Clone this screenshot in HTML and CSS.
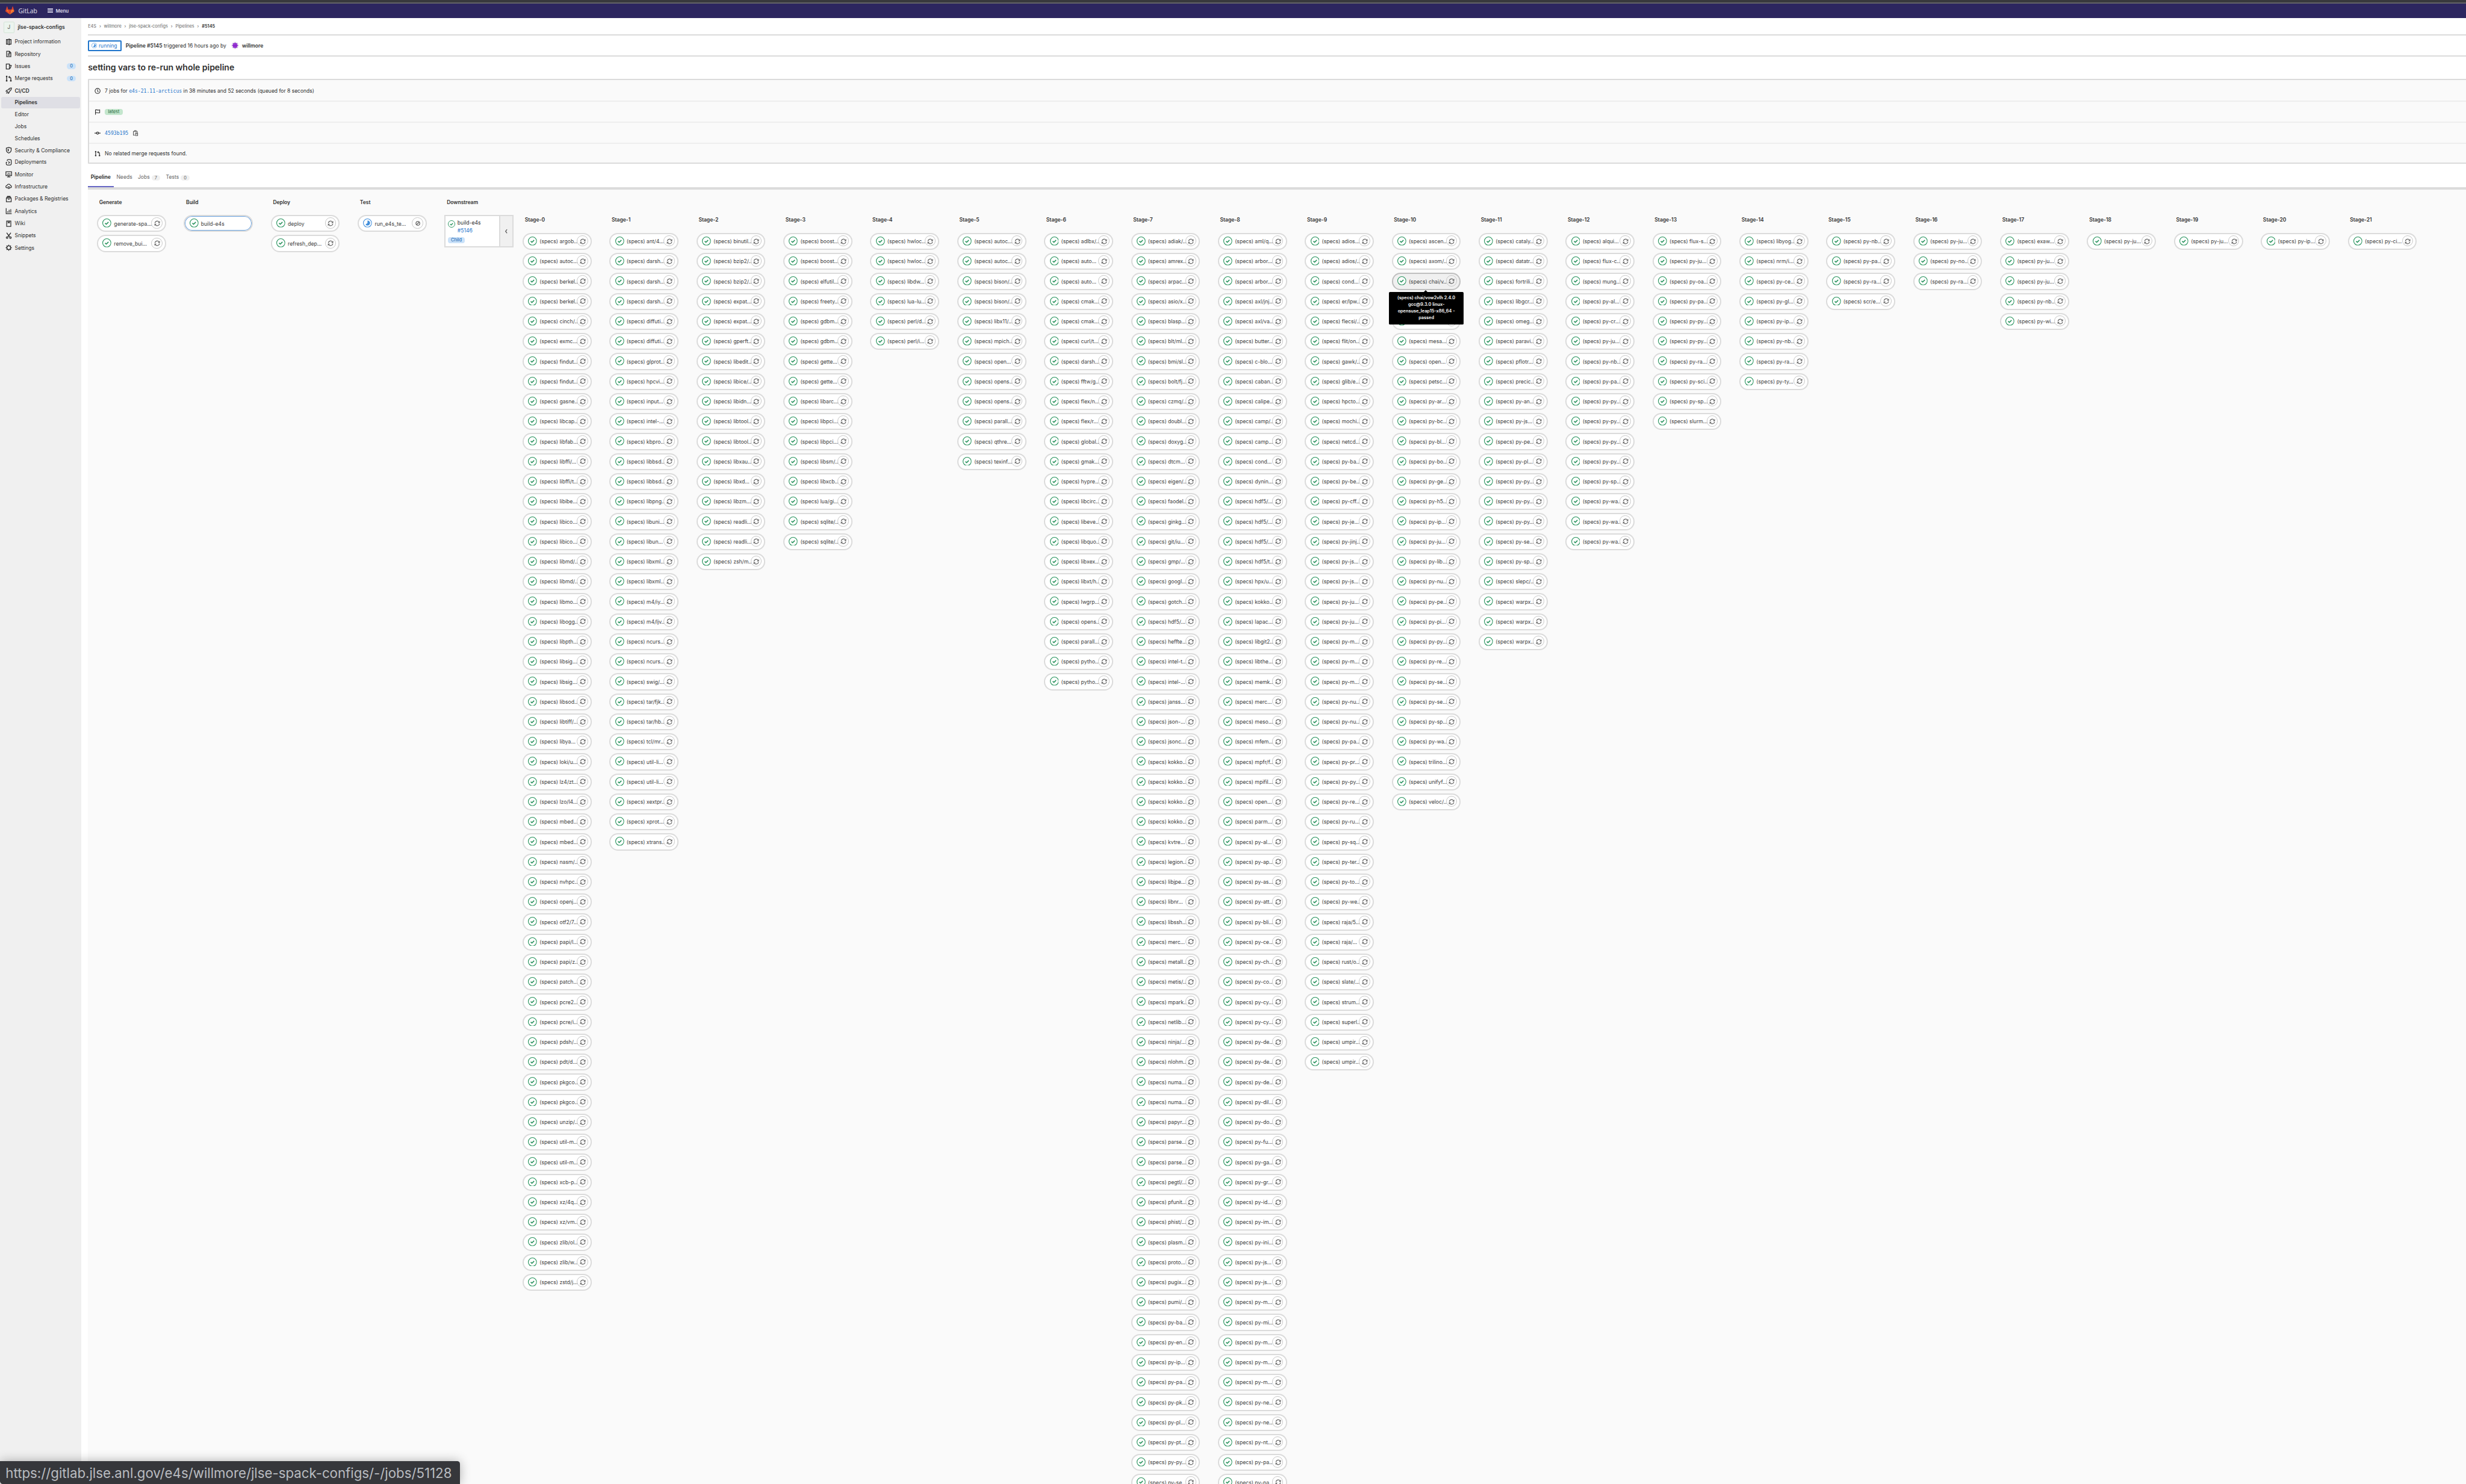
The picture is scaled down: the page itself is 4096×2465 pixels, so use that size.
FILE: index.html
```html
<!DOCTYPE html>
<html lang="en">
<head>
<meta charset="utf-8">
<title>Pipeline #5145 · jlse-spack-configs · GitLab</title>
<link rel="stylesheet" href="styles.css">
</head>
<body>
<svg class="sprite" aria-hidden="true">
  <symbol id="success" viewBox="0 0 16 16"><circle cx="8" cy="8" r="7.4" fill="#fff" stroke="#24915a" stroke-width="1.2"/><path d="M4.9 8.2 7.1 10.3 11 6.4" fill="none" stroke="#24915a" stroke-width="1.7"/></symbol>
  <symbol id="running" viewBox="0 0 16 16"><circle cx="8" cy="8" r="7.4" fill="#fff" stroke="#428fdc" stroke-width="1.2"/><path d="M8 3.4a4.6 4.6 0 1 1-3.6 7.5L8 8z" fill="#428fdc"/></symbol>
  <symbol id="retry" viewBox="0 0 16 16"><path d="M2 7.2A6.1 6.1 0 0 1 12.6 4M14 8.8A6.1 6.1 0 0 1 3.4 12" fill="none" stroke="#666" stroke-width="2"/><path d="M15 1.6V7H9.6zM1 14.4V9h5.4z" fill="#666"/></symbol>
  <symbol id="cancel" viewBox="0 0 16 16"><circle cx="8" cy="8" r="5" fill="none" stroke="#666" stroke-width="2"/><path d="M5 11l6-6" stroke="#666" stroke-width="2"/></symbol>
  <symbol id="project" viewBox="0 0 16 16"><path d="M6 2.5 9.5 1.2v13.6L6 13.5H2.5v-11H6zM6 2.5v11M9.5 2.5h4v11h-4" fill="none" stroke="currentColor" stroke-width="1.9"/></symbol>
  <symbol id="doc" viewBox="0 0 16 16"><path d="M3 1.5h6.5L13 5v9.5H3zM9 1.5V6h4M5.5 8.2h5M5.5 11h5" fill="none" stroke="currentColor" stroke-width="1.8"/></symbol>
  <symbol id="issues" viewBox="0 0 16 16"><path d="M2 2h7.5v12H2zM9.5 4.5l4.5 1-2.2 6-2.3 1.2" fill="none" stroke="currentColor" stroke-width="1.9"/></symbol>
  <symbol id="merge" viewBox="0 0 16 16"><path d="M3 3.5v10M13 13V7.5a3 3 0 0 0-3-3H8.5" fill="none" stroke="currentColor" stroke-width="1.9"/><path d="M10.4 1v7L6.8 4.5z" fill="currentColor"/><circle cx="3" cy="3" r="1.9" fill="currentColor"/><circle cx="3" cy="13.2" r="1.9" fill="currentColor"/><circle cx="13" cy="13.2" r="1.9" fill="currentColor"/></symbol>
  <symbol id="rocket" viewBox="0 0 16 16"><path d="M14.5 1.5c-4.5 0-7 2.2-8.5 5L3 7.200 1.500 9.500l3 .5 1.500 1.500.5 3 2.300-1.500.7-3c2.800-1.500 5-4 5-8.500zM2 14.500l2.300-2.300" fill="none" stroke="currentColor" stroke-width="1.800"/><circle cx="10.300" cy="5.700" r="1.200" fill="currentColor"/></symbol>
  <symbol id="shield" viewBox="0 0 16 16"><path d="M8 1.200 13.800 3v4.500c0 3.500-2.500 5.800-5.800 7.300C4.700 13.300 2.200 11 2.200 7.500V3z" fill="none" stroke="currentColor" stroke-width="1.800"/><path d="M8 4.500v6.500c-2-1-3-2.500-3-5z" fill="currentColor"/></symbol>
  <symbol id="deploy" viewBox="0 0 16 16"><path d="M4.500 5V3a1.500 1.500 0 0 1 1.500-1.500h5.500A2.500 2.500 0 0 1 14 4v8a2.500 2.500 0 0 1-2.500 2.500H4.500A2.500 2.500 0 0 1 2 12V8h2M7 6l3 2.500L7 11" fill="none" stroke="currentColor" stroke-width="1.800"/></symbol>
  <symbol id="monitor" viewBox="0 0 16 16"><path d="M1.200 2h13.600v9H1.200zM8 11v3M4 14.200h8M5 9V6.500M8 9V5M11 9V6" fill="none" stroke="currentColor" stroke-width="1.800"/></symbol>
  <symbol id="cloud" viewBox="0 0 16 16"><path d="M4.500 11.500H4a2.800 2.800 0 0 1-.3-5.600A4.500 4.500 0 0 1 12.300 6 2.800 2.800 0 0 1 12 11.500h-.5" fill="none" stroke="currentColor" stroke-width="1.800"/><circle cx="8" cy="11" r="2.200" fill="none" stroke="currentColor" stroke-width="1.900"/></symbol>
  <symbol id="package" viewBox="0 0 16 16"><path d="M2.200 6h11.600v8.500H2.200zM3.500 5.500V3.500h9v2M5 3.500V1.500h6v2M6 8.700h4" fill="none" stroke="currentColor" stroke-width="1.800"/></symbol>
  <symbol id="chart" viewBox="0 0 16 16"><path d="M1.800 1v13.200H15M5.500 12V8.500M9 12V5M12.800 12V3.500" fill="none" stroke="currentColor" stroke-width="1.800"/></symbol>
  <symbol id="book" viewBox="0 0 16 16"><path d="M3 1.500h10v13H3zM6.500 1.500v4.500l1.600-1 1.600 1V1.500" fill="none" stroke="currentColor" stroke-width="1.800"/></symbol>
  <symbol id="snippet" viewBox="0 0 16 16"><path d="M3 1l7 9.500M13 1 6 10.500" fill="none" stroke="currentColor" stroke-width="2"/><circle cx="4" cy="12.500" r="2" fill="none" stroke="currentColor" stroke-width="1.800"/><circle cx="12" cy="12.500" r="2" fill="none" stroke="currentColor" stroke-width="1.800"/></symbol>
  <symbol id="gear" viewBox="0 0 16 16"><circle cx="8" cy="8" r="4.500" fill="none" stroke="currentColor" stroke-width="2"/><path d="M8 .8v2.500M8 12.700v2.500M.8 8h2.500M12.700 8h2.500M2.900 2.900l1.800 1.800M11.300 11.300l1.800 1.800M2.900 13.100l1.800-1.800M11.300 4.700l1.800-1.800" stroke="currentColor" stroke-width="2"/></symbol>
  <symbol id="clock" viewBox="0 0 16 16"><circle cx="8" cy="8" r="6.600" fill="none" stroke="currentColor" stroke-width="1.800"/><path d="M8 3.800V8l2 3" fill="none" stroke="currentColor" stroke-width="1.700"/></symbol>
  <symbol id="flag" viewBox="0 0 16 16"><path d="M2.500 15V2.500C6 .8 8.500 4.500 13.500 2.500v7.300C8.500 11.500 6 8.200 2.500 10" fill="none" stroke="currentColor" stroke-width="1.800"/></symbol>
  <symbol id="commit" viewBox="0 0 16 16"><circle cx="8" cy="8" r="2.700" fill="none" stroke="currentColor" stroke-width="1.900"/><path d="M0 8h5M11 8h5" stroke="currentColor" stroke-width="1.900"/></symbol>
  <symbol id="copy" viewBox="0 0 16 16"><path d="M6 13.500H2.500V3.500h10V6M5.500 3.500V1.500h4v2M8 7.500h5.500v7H8zM9.500 10h2.500" fill="none" stroke="currentColor" stroke-width="1.700"/></symbol>
  <symbol id="tanuki" viewBox="0 0 36 36"><path d="M2 14 18 34.400.4 21.600a1.400 1.400 0 0 1-.4-1.400z" fill="#e24329"/><path d="m34 14-16 20.400 17.600-12.800a1.400 1.400 0 0 0 .4-1.400z" fill="#fc6d26"/><path d="M2 14h9.400L18 34.400z" fill="#fc6d26"/><path d="M34 14h-9.400L18 34.400z" fill="#fc8a36"/><path d="M11.400 14h13.200L18 34.400z" fill="#e24329"/><path d="M2 14 6 1.600c.2-.6 1.200-.6 1.400 0l4 12.400zM34 14 30 1.600c-.2-.6-1.200-.6-1.400 0l-4 12.400z" fill="#e24329"/></symbol>
</svg>

<div class="page">
  <div class="window-edge"></div>
  <header class="navbar">
    <svg class="logo"><use href="#tanuki"/></svg>
    <span class="brand">GitLab</span>
    <span class="burger"><i></i><i></i><i></i></span>
    <span class="menu">Menu</span>
  </header>

  <div class="body">
    <aside class="sidebar">
      <div class="context"><span class="avatar">J</span><b>jlse-spack-configs</b></div>
      <nav>
        <a><svg><use href="#project"/></svg>Project information</a>
        <a><svg><use href="#doc"/></svg>Repository</a>
        <a><svg><use href="#issues"/></svg>Issues<em>0</em></a>
        <a><svg><use href="#merge"/></svg>Merge requests<em>0</em></a>
        <a class="open"><svg><use href="#rocket"/></svg>CI/CD</a>
        <a class="sub active">Pipelines</a>
        <a class="sub">Editor</a>
        <a class="sub">Jobs</a>
        <a class="sub">Schedules</a>
        <a class="short"><svg><use href="#shield"/></svg>Security &amp; Compliance</a>
        <a><svg><use href="#deploy"/></svg>Deployments</a>
        <a><svg><use href="#monitor"/></svg>Monitor</a>
        <a><svg><use href="#cloud"/></svg>Infrastructure</a>
        <a><svg><use href="#package"/></svg>Packages &amp; Registries</a>
        <a><svg><use href="#chart"/></svg>Analytics</a>
        <a><svg><use href="#book"/></svg>Wiki</a>
        <a><svg><use href="#snippet"/></svg>Snippets</a>
        <a><svg><use href="#gear"/></svg>Settings</a>
      </nav>
    </aside>

    <main class="main">
      <div class="crumbs"><span>E4S</span><i>›</i><span>willmore</span><i>›</i><span>jlse-spack-configs</span><i>›</i><span>Pipelines</span><i>›</i><b>#5145</b></div>
      <div class="pipeline-head">
        <span class="state"><svg><use href="#running"/></svg>running</span>
        <span class="trigger"><b>Pipeline #5145</b> triggered 16 hours ago by</span>
        <svg class="user" viewBox="0 0 14 14"><circle cx="7" cy="7" r="7" fill="#f0f0f0"/><circle cx="7" cy="7" r="4.300" fill="#8a22cc"/><path d="M6.400 1.500h1.200v11H6.400zM1.500 6.400h11v1.200h-11zM3 3h1.500v1.500H3zM9.500 3H11v1.500H9.500zM3 9.500h1.500V11H3zM9.500 9.500H11V11H9.500z" fill="#8a22cc"/><path d="M4.700 4.700h1v1h-1zM8.300 4.700h1v1h-1zM4.700 8.300h1v1h-1zM8.300 8.300h1v1h-1z" fill="#e8d2f5"/></svg>
        <b class="author">willmore</b>
      </div>
      <h3 class="title">setting vars to re-run whole pipeline</h3>
      <section class="well">
        <div><svg><use href="#clock"/></svg><span class="summary">7 jobs for <code>e4s-21.11-arcticus</code> in 38 minutes and 52 seconds (queued for 8 seconds)</span></div>
        <div><svg><use href="#flag"/></svg><span class="tag">latest</span></div>
        <div><svg><use href="#commit"/></svg><code class="sha">4593b195</code><svg class="copy"><use href="#copy"/></svg></div>
        <div><svg><use href="#merge"/></svg><span>No related merge requests found.</span></div>
      </section>
      <div class="tabs">
        <span class="tab current">Pipeline</span>
        <span class="tab">Needs</span>
        <span class="tab">Jobs<em>7</em></span>
        <span class="tab">Tests<em>0</em></span>
      </div>
      <section class="graph">
        <div class="stages" id="parent"></div>
        <div class="downstream">
          <h4>Downstream</h4>
          <div class="card">
            <div class="card-main">
              <div class="card-name"><svg><use href="#success"/></svg><span>build-e4s</span></div>
              <span class="card-link">#5146</span>
              <span class="card-tag">Child</span>
            </div>
            <div class="card-toggle"><svg viewBox="0 0 8 12"><path d="M6 1.500 2.500 6 6 10.500" fill="none" stroke="#555" stroke-width="1.800"/></svg></div>
          </div>
        </div>
        <div class="stages child" id="child"></div>
      </section>
    </main>
  </div>
  <div class="statusbar">https://gitlab.jlse.anl.gov/e4s/willmore/jlse-spack-configs/-/jobs/51128</div>
</div>
<script src="script.js"></script>
</body>
</html>
```
FILE: styles.css
```css
* { box-sizing: border-box; }
html, body { margin: 0; padding: 0; overflow: hidden; background: #fff; }
body { font-family: Inter, "Noto Sans", sans-serif; font-size: 9.3px; color: #303030; }
svg { display: block; flex: none; }
i, em { font-style: normal; }
b { font-weight: 600; }
.sprite { position: absolute; width: 0; height: 0; }

.page { --line: 2.180px; position: relative; zoom: 0.92544; width: 4426px; height: 2664px; overflow: hidden; display: flex; flex-direction: column; }
.window-edge { flex: none; height: 6px; background: #38393d; border-bottom: var(--line) solid #636468; }

.navbar { flex: none; height: 26px; display: flex; align-items: center; padding-left: 10px; background: #2c265f; color: #dcdbea; }
.logo { width: 16px; height: 16px; }
.brand { width: 35px; margin-left: 7px; font: 11.2px "Open Sans", sans-serif; color: #e6e5f0; }
.burger { width: 10px; margin-left: 17px; display: flex; flex-direction: column; gap: 1.400px; }
.burger i { height: 1.400px; background: #cfcde2; }
.menu { margin-left: 5px; font-size: 8.600px; font-weight: 600; }

.body { flex: 1; min-height: 0; display: flex; }

.sidebar { flex: none; width: 146px; background: #f0f0f0; }
.context { height: 32px; display: flex; align-items: center; gap: 6px; padding: 2px 0 0 6px; font-size: 9.300px; }
.avatar { width: 20px; height: 20px; border: 1px solid #d5e5d8; border-radius: 2px; background: #ecf4ee; text-align: center; line-height: 19px; color: #555; }
.sidebar nav a { position: relative; height: 22px; display: flex; align-items: center; padding-left: 10px; letter-spacing: -0.050px; }
.sidebar nav svg { width: 12px; height: 12px; margin-right: 4.500px; }
.sidebar nav .sub { padding-left: 26.500px; }
.sidebar nav .open { font-weight: 600; }
.sidebar nav .active { height: 20px; margin: 0 2px; padding-left: 24.500px; background: #dfdfe5; border-radius: 3px; font-weight: 600; }
.sidebar nav .short { height: 20px; }
.sidebar nav em { margin-left: auto; margin-right: 10px; width: 16px; height: 10px; border-radius: 5px; background: #cbe2f9; color: #0b5cad; font-size: 8px; line-height: 10px; text-align: center; }

.main { flex: 1; min-width: 0; margin-left: 12px; display: flex; flex-direction: column; }
.crumbs { flex: none; height: 32px; display: flex; align-items: center; font-size: 7.950px; color: #666; border-bottom: var(--line) solid #dbdbdb; }
.crumbs i { width: 13.500px; text-align: center; font-size: 8px; }
.crumbs b { color: #303030; }

.pipeline-head { flex: none; height: 38px; display: flex; align-items: center; border-bottom: var(--line) solid #dbdbdb; }
.state { width: 60px; height: 20px; border: var(--line) solid #1f75cb; border-radius: 2px; display: flex; align-items: center; padding-left: 4px; gap: 3px; color: #1f75cb; font-size: 9.200px; }
.state svg { width: 10px; height: 10px; }
.trigger { margin-left: 7.500px; width: 181px; white-space: nowrap; }
.user { width: 14px; height: 14px; margin-left: 8px; }
.author { margin-left: 6px; }

.title { flex: none; margin: 0; height: 40px; line-height: 38px; font-size: 15.200px; font-weight: 600; letter-spacing: -0.050px; }

.well { flex: none; height: 152px; border: var(--line) solid #dbdbdb; border-right: 0; border-radius: 2px 0 0 2px; background: #fafafa; }
.well > div { height: 38px; border-bottom: var(--line) solid #eee; display: flex; align-items: center; padding: 2px 0 0 10px; }
.well > div:last-child { height: 34px; border-bottom: 0; }
.well svg { width: 11px; height: 11px; margin-right: 7px; }
.summary { font-size: 9.200px; }
code { font-family: "DejaVu Sans Mono", monospace; font-size: 8.800px; color: #1f75cb; }
.tag { width: 32px; height: 10px; border-radius: 4px; background: #c3e6cd; color: #24663b; font-size: 8px; line-height: 10px; text-align: center; }
.well .sha { margin-top: -1px; }
.well .copy { margin-left: 7px; color: #555; }

.tabs { flex: none; height: 46px; border-bottom: 4.350px solid #dbdbdb; display: flex; padding-top: 8px; color: #666; }
.tab { height: 34px; line-height: 34px; padding: 0 5px; display: flex; align-items: center; }
.tab em { margin-left: 3px; width: 16px; height: 10px; border-radius: 5px; background: #f0f0f0; font-size: 8px; line-height: 10px; text-align: center; }
.current { width: 46px; border-bottom: var(--line) solid #6666c4; font-weight: 600; color: #1f1f1f; padding-top: 2px; }

.graph { flex: 1; min-height: 0; display: flex; align-items: flex-start; padding-left: 16px; background: #fafafa; overflow: hidden; }
.stages { display: flex; gap: 32px; }
.child { margin-left: 16px; padding-top: 32px; }
.stage { width: 124px; }
.graph h4 { margin: 0; height: 46px; line-height: 46px; padding-left: 4px; font-size: 9.200px; font-weight: 600; }
.jobs { display: flex; flex-direction: column; gap: 5.340px; }
.job { position: relative; height: 30.600px; border: var(--line) solid #dbdbdb; border-radius: 15.300px; background: #fff; display: flex; align-items: center; padding: 0 4.500px 1.500px 8px; color: #404040; }
.job > svg { width: 16px; height: 16px; }
.job .name { flex: 1; width: 0; margin-left: 4.500px; white-space: nowrap; padding-top: 2px; font-size: 9.350px; }
.job .action { width: 20px; height: 20px; border: 1px solid #c8c8c8; border-radius: 50%; display: flex; align-items: center; justify-content: center; background: inherit; }
.job .action svg { width: 11px; height: 11px; margin: 1px 0 0 1px; }
.job.selected { box-shadow: inset 0 0 0 1.100px #6ea6e2; }
.job.hovered { background: #f0f0f0; border-color: #bfbfbf; }

.downstream { width: 124px; margin-left: 32px; }
.card { height: 58px; display: flex; border: var(--line) solid #dbdbdb; background: #fff; }
.card-main { width: 96px; display: flex; flex-direction: column; align-items: flex-start; padding: 5px 0 0 4px; }
.card-name { height: 14px; display: flex; align-items: center; gap: 4px; }
.card-name svg { width: 13px; height: 13px; margin-top: 3px; }
.card-link { margin-left: 17px; height: 14px; line-height: 14px; color: #1f75cb; }
.card-tag { margin-top: 5px; width: 30px; height: 10px; border-radius: 4px; background: #cbe2f9; color: #0b5cad; font-size: 8px; line-height: 10px; text-align: center; }
.card-toggle { flex: 1; border-left: var(--line) solid #dbdbdb; background: #f0f0f0; display: flex; align-items: center; justify-content: center; }
.card-toggle svg { width: 6px; height: 9px; }

.tooltip { position: absolute; z-index: 2; top: 32.500px; left: -7px; width: 134px; height: 58px; border-radius: 2px; background: #000; color: #fff; font-size: 7.900px; font-weight: 600; line-height: 12px; text-align: center; padding: 4px 12px; }
.tooltip::before { content: ""; position: absolute; left: 63px; top: -4px; border: 4px solid transparent; border-top: 0; border-bottom-color: #000; }

.statusbar { position: absolute; left: 0; bottom: 0; width: 826px; height: 42px; border-radius: 0 5px 0 5px; background: #36373b; color: #b9bcc0; font-size: 24.050px; line-height: 43px; padding-left: 10px; white-space: nowrap; box-shadow: 0 0 20px rgba(0, 0, 0, 0.300); }
```
FILE: script.js
```js
const use = (id) => `<svg><use href="#${id}"/></svg>`;

function job(name, opts = {}) {
  const cls = ["job", opts.selected && "selected", opts.hovered && "hovered"].filter(Boolean).join(" ");
  const action = opts.selected ? "" : `<span class="action">${use(opts.running ? "cancel" : "retry")}</span>`;
  const tip = opts.hovered ? `<div class="tooltip">${opts.hovered}</div>` : "";
  return `<div class="${cls}">${use(opts.running ? "running" : "success")}<span class="name">${name}</span>${action}${tip}</div>`;
}

const stage = (title, jobs) => `<div class="stage"><h4>${title}</h4><div class="jobs">${jobs.join("")}</div></div>`;

document.getElementById("parent").innerHTML = [
  stage("Generate", [job("generate-spa…"), job("remove_bui…")]),
  stage("Build", [job("build-e4s", { selected: true })]),
  stage("Deploy", [job("deploy"), job("refresh_dep…")]),
  stage("Test", [job("run_e4s_te…", { running: true })]),
].join("");

// One string per stage; "-" marks a job whose name is covered by the open tooltip.
const specs = [
  "argob autoc berkel berkel cinch/ exmc findut findut gasne libcap libfab libffi/ libffi/t libibe libico libico libmd/ libmd/ libmo libogg libpth libsig libsig libsod libtiff/ libya loki/u lz4/zt lzo/l4 mbed mbed nasm/ nvhpc openj otf2/7 papi/l papi/z patch pcre2 pcre/i pdsh/ pdt/d pkgco pkgco unzip/ util-m util-m xcb-p xz/4q xz/vm zlib/ol zlib/w zstd/j",
  "ant/4 darsh darsh darsh diffuti diffuti glprot hpcvi input intel- kbpro libbsd libbsd libpng libuni libun libxml libxml m4/iy m4/ljv ncurs ncurs swig/ tar/fjk tar/hb tcl/mr util-li util-li xextpr xprot xtrans",
  "binutil bzip2/ bzip2/ expat expat gperft libedit libice/ libidn libtool libtool libxau libxd libzm readli readli zsh/m",
  "boost boost elfutil freety gdbm gdbm gette gette libarc libpci libpci libsm/ libxcb lua/gi sqlite/ sqlite/",
  "hwloc hwloc libdw lua-lu perl/d perl/i",
  "autoc autoc bison/ bison/ libx11/ mpich open opens opens parall qthre texinf",
  "adlbx/ auto auto cmak cmak curl/t darsh fftw/g flex/n flex/r global gmak hypre libcirc libeve libquo libxex libxt/h lwgrp opens parall pytho pytho",
  "adiak/ amrex arpac asio/x blasp blt/ml bmi/sl bolt/fj czmq/ doubl doxyg dtcm eigen/ faodel ginkg git/iu gmp/ googl gotch hdf5/ heffte intel-t intel- janss json- jsonc kokko kokko kokko kokko kvtre legion libjpe libnr libssh merc metall metis/ mpark netlib ninja/ nlohm numa numa papyr parse parse pegtl/ pfunit phist/ plasm proto pugix pumi/ py-ba py-en py-ip py-pa py-pk py-pl py-pt py-py py-se",
  "aml/q arbor arbor axl/jnj axl/va butter c-blo caban calipe camp/ camp cond dynin hdf5/ hdf5/ hdf5/ hdf5/t hpx/u kokko lapac libgit2 libthe memk merc meso mfem mpfr/f mpifil open parm py-al py-ap py-as py-att py-bli py-ce py-ch py-co py-cy py-cy py-de py-de py-de py-dil py-do py-fu py-ga py-gr py-id py-im py-ini py-js py-js py-m py-mi py-m py-m py-m py-ne py-ne py-nt py-pa py-pa",
  "adios adios/ cond er/lpw flecsi/ flit/on gawk/ glib/e hpcto mochi netcd py-ba py-be py-cff py-je py-jinj py-js py-js py-ju py-ju py-m py-m py-m py-nu py-nu py-pa py-pr py-py py-re py-ru py-sq py-ter py-to py-we raja/5 raja/ rust/o slate/ strum superl umpir umpir",
  "ascen axom/ chai/v - - mesa open petsc py-ar py-bc py-bl py-bo py-ge py-h5 py-ip py-ju py-lib py-nu py-pe py-pi py-py py-re py-se py-se py-sp py-wa trilino unifyf veloc/",
  "cataly datatr fortrili libgcr omeg paravi pflotr precic py-an py-js py-pe py-pl py-py py-py py-py py-se py-sp slepc/ warpx warpx warpx",
  "alqui flux-c mung py-al py-cr py-ju py-nb py-pa py-py py-py py-py py-py py-sp py-wa py-wa py-wa",
  "flux-s py-ju py-oa py-pa py-py py-py py-ra py-sci py-sp slurm",
  "libyog nrm/i py-ce py-gl py-ip py-nb py-ra py-ty",
  "py-nb py-pa py-ra scr/e",
  "py-ju py-no py-ra",
  "exaw py-ju py-ju py-nb py-wi",
  "py-ju",
  "py-ju",
  "py-ip",
  "py-ci",
];

const tip = "(specs) chai/vow2vlh 2.4.0 gcc@9.3.0 linux-opensuse_leap15-x86_64 - passed";

const specJob = (s) => {
  if (s === "-") return job("");
  return job(`(specs) ${s}…`, s === "chai/v" ? { hovered: tip } : {});
};

document.getElementById("child").innerHTML = specs
  .map((list, n) => stage(`Stage-${n}`, list.split(" ").map(specJob)))
  .join("");
```
